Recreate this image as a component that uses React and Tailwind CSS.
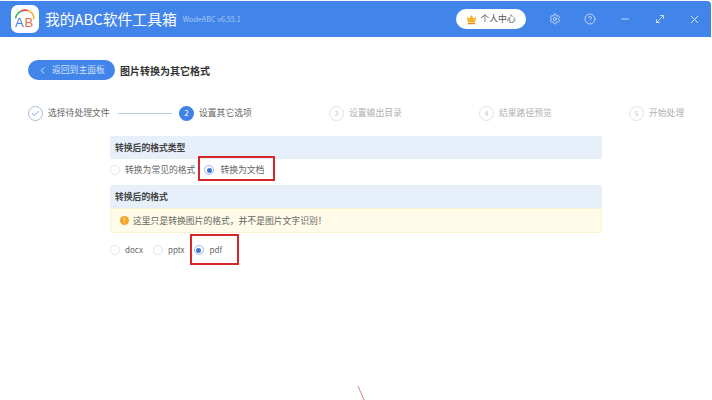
import { Check, ChevronLeft, CircleHelp, Minus, MoveDiagonal, Settings, X } from "lucide-react";

const font = { fontFamily: '"Noto Sans CJK SC", "Noto Sans", sans-serif' };

const steps = [
  { label: "选择待处理文件", state: "done" },
  { label: "设置其它选项", state: "active" },
  { label: "设置输出目录", state: "todo" },
  { label: "结果路径预览", state: "todo" },
  { label: "开始处理", state: "todo" },
];

const Logo = () => (
  <div className="w-[28px] h-[28px] rounded-[7px] bg-white flex items-center justify-center">
    <svg width="24" height="24" viewBox="0 0 24 24" fill="none">
      <path d="M2.5 11.5 A9.5 9.5 0 0 1 8 4.2" stroke="#3fb56b" strokeWidth="1.6" />
      <path d="M8 4.2 A9.5 9.5 0 0 1 15 3.6" stroke="#e8473f" strokeWidth="1.6" />
      <path d="M15 3.6 A9.5 9.5 0 0 1 21 12" stroke="#f2b632" strokeWidth="1.6" />
      <text x="2" y="19.5" fontSize="13" fontFamily="Liberation Sans" fill="#3b7de0">A</text>
      <text x="11.5" y="19.5" fontSize="13" fontFamily="Liberation Sans" fill="#e8683f">B</text>
    </svg>
  </div>
);

const Crown = () => (
  <svg width="11" height="11" viewBox="0 0 12 12">
    <path d="M1 2.5 L3.4 5.2 L6 1 L8.6 5.2 L11 2.5 L10 9 H2 Z" fill="#f5b323" />
    <rect x="2" y="9.6" width="8" height="1.6" fill="#e8862a" />
  </svg>
);

const Step = ({ label, state, connector }) => (
  <div className="flex items-center">
    {state === "done" && (
      <span className="w-[15px] h-[15px] rounded-full border border-[#a9bdd6] flex items-center justify-center">
        <Check size={9} className="text-[#4a86e8]" />
      </span>
    )}
    {state === "active" && (
      <span className="w-[15px] h-[15px] rounded-full bg-[#3f82ea] text-white text-[8px] flex items-center justify-center">2</span>
    )}
    {state === "todo" && (
      <span className="w-[15px] h-[15px] rounded-full border border-[#e2e2e2] text-[#c4c4c4] text-[7px] flex items-center justify-center">
        {label === "设置输出目录" ? 3 : label === "结果路径预览" ? 4 : 5}
      </span>
    )}
    <span className={`ml-[5px] text-[8.8px] whitespace-nowrap ${state === "todo" ? "text-[#b0b0b0]" : "text-[#666666]"}`}>{label}</span>
    {connector && <span className="ml-[8px] w-[54px] h-px bg-[#b9cde6]" />}
  </div>
);

const Radio = ({ label, checked, latin, className }) => (
  <div className={`flex items-center ${className || ""}`}>
    <span className={`w-[10px] h-[10px] rounded-full border flex items-center justify-center ${checked ? "border-[#9dbcec]" : "border-[#e6e6e6]"}`}>
      {checked && <span className="w-[5px] h-[5px] rounded-full bg-[#3f78d0]" />}
    </span>
    <span className={`${checked ? "ml-[6px]" : "ml-[5px]"} ${latin ? "text-[8px]" : "text-[8.8px]"} text-[#666666] whitespace-nowrap`}>{label}</span>
  </div>
);

const SectionTitle = ({ children }) => (
  <div className="h-[23px] bg-[#e7effb] rounded-t-[2px] flex items-center pl-[5px] text-[8.8px] font-bold text-[#444444]">{children}</div>
);

export default function App() {
  return (
    <div className="w-[712px] h-[400px] bg-white overflow-hidden relative" style={font}>
      <header className="mt-px mr-px h-[36px] bg-[#4285ea] rounded-tr-[4px] flex items-center pl-[11px] pr-[10px]">
        <Logo />
        <span className="ml-[6px] text-[14.8px] text-white whitespace-nowrap">我的ABC软件工具箱</span>
        <span className="ml-[6px] text-[7.2px] text-[#a9c8f5] whitespace-nowrap">WodeABC v6.55.1</span>
        <div className="ml-auto flex items-center">
          <div className="w-[70px] h-[20px] rounded-full bg-white flex items-center justify-center text-[8.8px] text-[#555555]">
            <Crown />
            <span className="ml-[3px]">个人中心</span>
          </div>
          <Settings size={12} className="ml-[23px] text-[#dbe8fb]" strokeWidth={1.6} />
          <CircleHelp size={12} className="ml-[23px] text-[#dbe8fb]" strokeWidth={1.6} />
          <Minus size={12} className="ml-[23px] text-[#dbe8fb]" strokeWidth={1.6} />
          <MoveDiagonal size={12} className="ml-[23px] text-[#e6effc]" strokeWidth={1.6} />
          <X size={13} className="ml-[22px] text-[#eef4fd]" strokeWidth={1.6} />
        </div>
      </header>

      <main className="pt-[23px] pl-[28px]">
        <div className="flex items-center">
          <button className="w-[87px] h-[20px] rounded-full bg-[#4285ea] text-[#cfe0fa] text-[8.8px] flex items-center pl-[9px]">
            <ChevronLeft size={11} className="text-[#e6effc]" />
            <span className="ml-[4px] whitespace-nowrap">返回到主面板</span>
          </button>
          <h1 className="ml-[5px] text-[10px] font-bold text-[#333333] whitespace-nowrap">图片转换为其它格式</h1>
        </div>

        <div className="mt-[25px] grid grid-cols-[151px_150px_150px_150px_60px] h-[16px]">
          {steps.map((s, i) => (
            <Step key={s.label} {...s} connector={i === 0} />
          ))}
        </div>

        <div className="mt-[15px] ml-[82px] w-[492px]">
          <SectionTitle>转换后的格式类型</SectionTitle>
          <div className="h-[26px] pb-[4px] flex items-center">
            <Radio label="转换为常见的格式" />
            <Radio label="转换为文档" checked className="ml-[9px]" />
          </div>
          <SectionTitle>转换后的格式</SectionTitle>
          <div className="h-[25px] bg-[#fefbe8] border border-[#fbf2d2] rounded-b-[2px] flex items-center pl-[9px]">
            <span className="w-[9px] h-[9px] rounded-full bg-[#f5a623] text-white text-[7px] leading-none flex items-center justify-center">!</span>
            <span className="ml-[4px] text-[8.8px] text-[#666666] whitespace-nowrap">这里只是转换图片的格式，并不是图片文字识别！</span>
          </div>
          <div className="h-[34px] flex items-center">
            <Radio label="docx" latin />
            <Radio label="pptx" latin className="ml-[10px]" />
            <Radio label="pdf" latin checked className="ml-[9px]" />
          </div>
        </div>
      </main>

      {/* annotation boxes drawn over the page */}
      <div className="absolute left-[198px] top-[156px] w-[77px] h-[25px] border-2 border-[#d5272b]" />
      <div className="absolute left-[190px] top-[234px] w-[49px] h-[31px] border-2 border-[#d5272b]" />
      <svg className="absolute left-[355px] top-[385px]" width="14" height="15" viewBox="0 0 14 15">
        <path d="M3 1 L9 15" stroke="#c9655f" strokeWidth="0.8" />
      </svg>
    </div>
  );
}
